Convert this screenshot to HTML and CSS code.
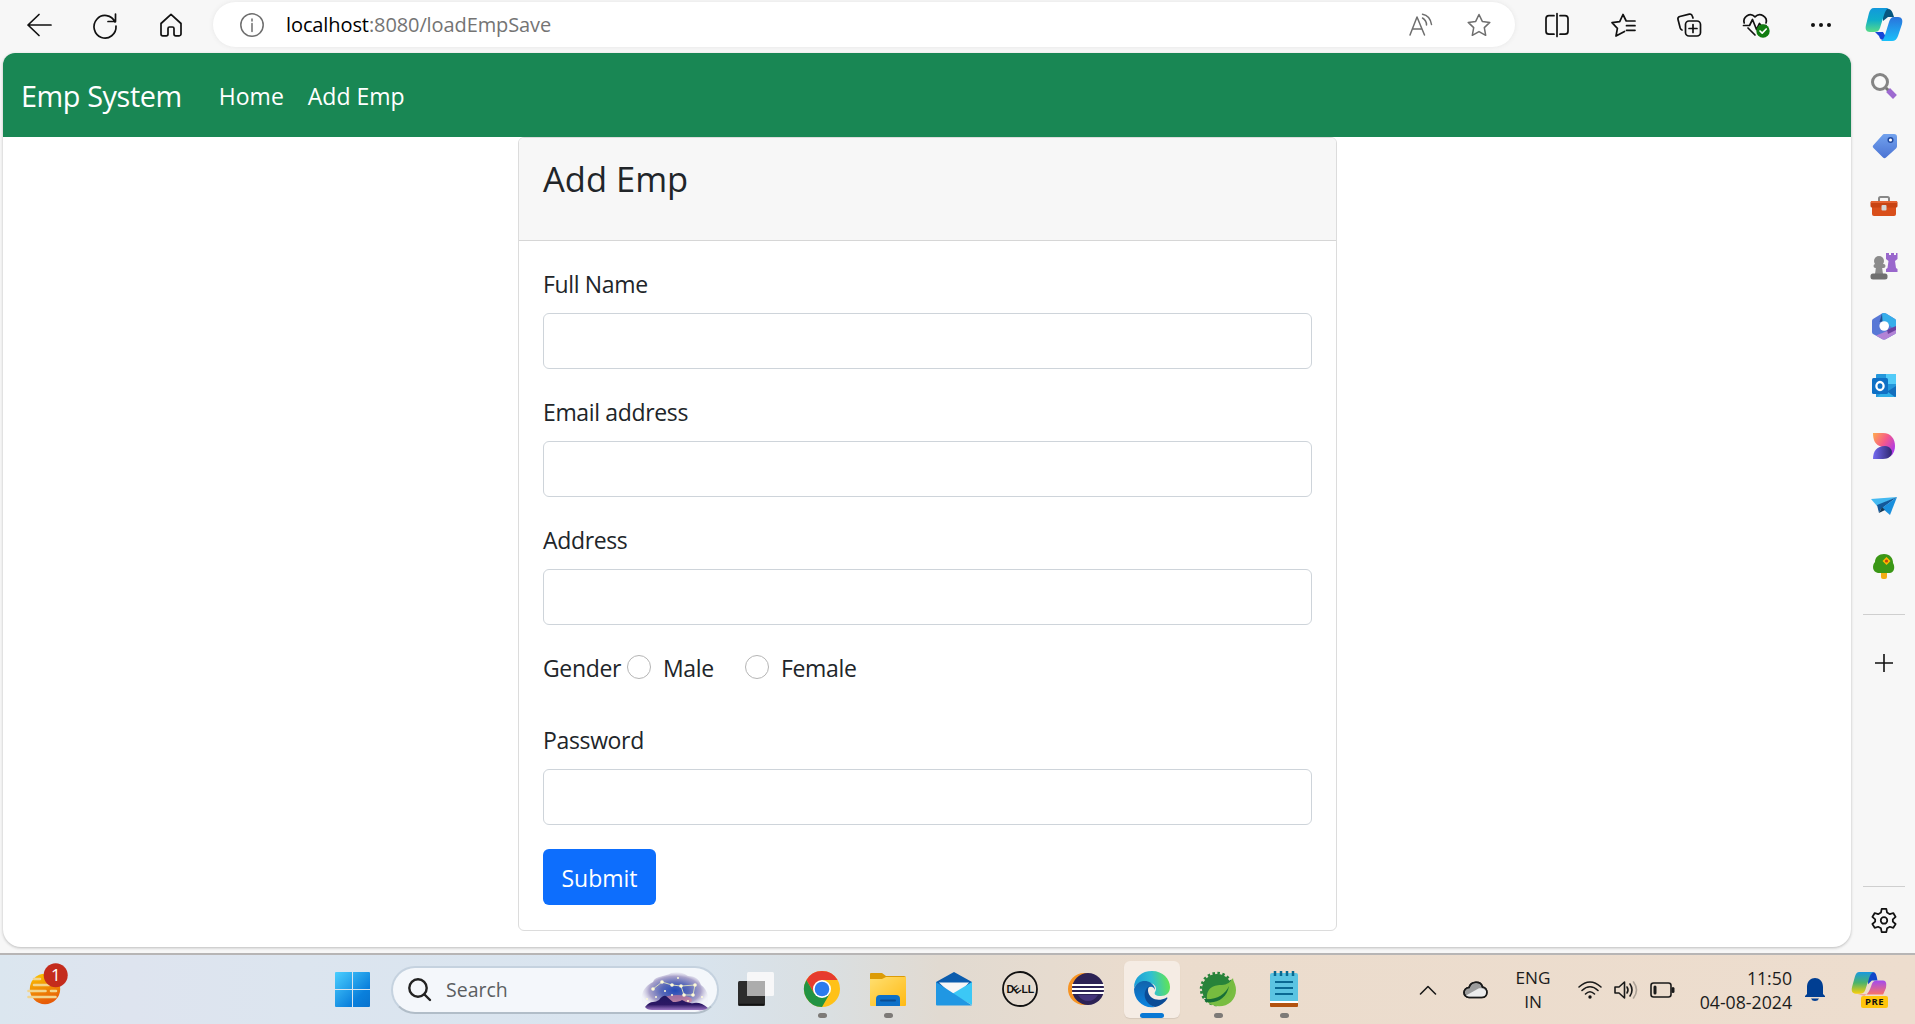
FILE: index.html
```html
<!DOCTYPE html>
<html lang="en">
<head>
<meta charset="utf-8">
<title>Add Emp</title>
<link rel="stylesheet" href="styles.css">
</head>
<body>
<div class="browser">
  <div class="main">
    <header class="toolbar">
      <svg class="ic" viewBox="0 0 24 24"><path d="M24 12H1M12 1.500 1 12 12 22.500"/></svg>
      <svg class="ic" viewBox="0 0 24 24"><path d="M22 9a11 11.300 0 1 0 1 4M22.500 1v7.500H15"/></svg>
      <svg class="ic" viewBox="0 0 24 24"><path d="M2 10.500 12 1.300l10 9.200V21a1.800 1.800 0 0 1-1.800 1.800h-3.400A1.800 1.800 0 0 1 15 21v-5.500a1.500 1.500 0 0 0-1.500-1.500h-3A1.500 1.500 0 0 0 9 15.500V21a1.800 1.800 0 0 1-1.800 1.800H3.800A1.800 1.800 0 0 1 2 21z"/></svg>
      <div class="address">
        <svg class="ic grey" viewBox="0 0 24 24"><circle cx="12" cy="12" r="11.200"/><path d="M12 10.500v8M12 6v2"/></svg>
        <span class="url"><b>localhost</b>:8080/loadEmpSave</span>
        <svg class="ic grey read" viewBox="0 0 24 24"><path d="M1 22 8 4l7.500 18M3.500 16h9M13.500 5a8 8 0 0 1 4 7M13.500 1.200c4.500.8 8 4 9 10.300" /></svg>
        <svg class="ic grey" viewBox="0 0 24 24"><path d="m12 1.500 3.300 6.900 7.500 1-5.500 5.200 1.400 7.700-6.700-3.700-6.700 3.700 1.400-7.700-5.500-5.200 7.500-1z"/></svg>
      </div>
      <div class="tools">
        <svg class="ic" viewBox="0 0 24 24"><path d="M9 2.700H4A3 3 0 0 0 1 5.700v12.500a3 3 0 0 0 3 3h5M15 2.700h5a3 3 0 0 1 3 3v12.500a3 3 0 0 1-3 3h-5M12 .500v23"/></svg>
        <svg class="ic" viewBox="0 0 24 24"><path d="M13.500 18.500 5 23l1.400-7.700L1 9.700l7.700-1L12 1.500l3.200 6.500H24M15.500 12.700H24M15.500 17.300H24"/></svg>
        <svg class="ic" viewBox="0 0 24 24"><rect x="8.500" y="8" width="15" height="15" rx="3.500"/><path d="M16 11.500v8M12 15.500h8M16 5l-.7-2a2.500 2.500 0 0 0-3-1.800L2.800 3.500A2.500 2.500 0 0 0 1 6.500l2.200 8.500c.3 1 1 1.700 1.800 2"/></svg>
        <svg class="ic health" viewBox="0 0 27 24"><path d="M1.200 10C-.5 4 7-1.500 12 3.800 17-1.500 25 4 23 10M.500 12.500h6l3-6 4 10 3-6 1.500 2H23M5 15l7 7"/><circle cx="20" cy="18" r="6.700" fill="#107c10" stroke="none"/><path d="m17 18 2.200 2.200 4-4.200" stroke="#fff"/></svg>
        <svg class="ic" viewBox="0 0 24 24"><g fill="#111" stroke="none"><circle cx="4" cy="12" r="2"/><circle cx="12" cy="12" r="2"/><circle cx="20" cy="12" r="2"/></g></svg>
      </div>
    </header>
    <div class="page">
      <nav class="navbar">
        <a class="brand">Emp System</a>
        <a class="nav-link">Home</a>
        <a class="nav-link">Add Emp</a>
      </nav>
      <main class="card">
        <div class="card-header"><p class="title">Add Emp</p></div>
        <form class="card-body">
          <div class="field"><label class="label" for="name">Full Name</label><input class="control" id="name" type="text"></div>
          <div class="field"><label class="label" for="email">Email address</label><input class="control" id="email" type="email"></div>
          <div class="field"><label class="label" for="addr">Address</label><input class="control" id="addr" type="text"></div>
          <div class="gender">
            <span class="gender-title">Gender</span>
            <input class="radio" type="radio" name="gender" id="m"><label class="male" for="m">Male</label>
            <input class="radio" type="radio" name="gender" id="f"><label for="f">Female</label>
          </div>
          <div class="field"><label class="label" for="pw">Password</label><input class="control" id="pw" type="password"></div>
          <button class="submit" type="button">Submit</button>
        </form>
      </main>
    </div>
  </div>
  <aside class="sidebar">
    <div class="cell first">
      <svg width="36" height="33" viewBox="0 0 36 33">
        <defs>
          <linearGradient id="cpA" x1="0" y1="0" x2="0" y2="1"><stop offset="0" stop-color="#1298dc"/><stop offset=".5" stop-color="#0faec9"/><stop offset="1" stop-color="#58db88"/></linearGradient>
          <linearGradient id="cpB" x1="0" y1="0" x2="0" y2="1"><stop offset="0" stop-color="#2a73dc"/><stop offset="1" stop-color="#18c0fa"/></linearGradient>
        </defs>
        <path d="M17 1h5c3 0 4 2 5 5l1 3h-6l-5 4z" fill="#07577f"/>
        <path d="M9 24h8l5 8h-4c-3 0-4-1-5-4z" fill="#1646d8"/>
        <path d="M8 0h15c-3 1-4 4-5 7l-4 13c-1 3-3 4-6 4H4c-4 0-5-3-4-7L3 5c1-3 2-5 5-5z" fill="url(#cpA)"/>
        <path d="M28 9h4c4 0 5 3 4 7l-4 12c-1 3-3 5-6 5H15c2-1 3-3 4-6l4-13c1-3 2-5 5-5z" fill="url(#cpB)"/>
      </svg>
    </div>
    <div class="cell"><svg class="side-ic" viewBox="0 0 28 28"><circle cx="10" cy="10" r="7.500" fill="#fafafa" stroke="#858585" stroke-width="3"/><path d="m16 16 3 3" stroke="#777" stroke-width="3"/><path d="m20 20 3 3" stroke="#9d6ad0" stroke-width="5.500" stroke-linecap="square"/></svg></div>
    <div class="cell"><svg class="side-ic" viewBox="0 0 28 28"><defs><linearGradient id="tag" x1="0" y1="0" x2="0" y2="1"><stop stop-color="#72a2ee"/><stop offset="1" stop-color="#4b73d3"/></linearGradient></defs><path d="M14 2h10c2 0 3 1 3 3v9c0 1-.5 2-1 2.500L16 25.500c-1 1-2 1-3 0L3.500 16c-1-1-1-2 0-3l9-10c.5-.7 1-1 1.500-1z" fill="url(#tag)"/><circle cx="20.500" cy="8" r="2.300" fill="#fff" stroke="#234a9e" stroke-width="1.500"/></svg></div>
    <div class="cell"><svg class="side-ic" viewBox="0 0 28 28"><path d="M9 9V6.500Q9 5 10.500 5h7Q19 5 19 6.500V9" fill="none" stroke="#888" stroke-width="2"/><path d="M2 13h24v9q0 2-2 2H4q-2 0-2-2z" fill="#d94f1b"/><rect x=".5" y="9" width="27" height="6.500" rx="1.500" fill="#c84312"/><path d="M1 10h26" stroke="#e46332" stroke-width="2"/><rect x="11.500" y="13" width="5" height="5.500" rx="1" fill="#d4d4d4"/></svg></div>
    <div class="cell"><svg class="side-ic" viewBox="0 0 28 28"><path d="M16 1h3v2h2V1h3v2h2V1h1.500v6L25 9l1 7 1.500 1v3H16v-3l1.500-1 1-7L16 7z" fill="#9967cc"/><g fill="#8b8b8b"><circle cx="9" cy="9" r="5"/><rect x="3.500" y="12" width="12" height="4" rx="2"/><path d="M6 15h6l1 7H5z"/><rect x=".5" y="21.500" width="17" height="6" rx="2.500" fill="#707070"/></g></svg></div>
    <div class="cell"><svg class="side-ic" viewBox="0 0 28 28"><path d="M14 1q1 0 2 .5l9 5.500q1 .7 1 2v11q0 1.300-1 2l-9 5q-2 1-4 0l-9-5q-1-.7-1-2V9q0-1.300 1-2l9-5.500q1-.5 2-.5z" fill="#5878d6"/><path d="M12 1.500q2-1 4 0L25 7q1 .7 1 2v9L14 10l-4-1z" fill="#36aeea"/><path d="M26 16v4q0 1.300-1 2l-9 5q-2 1-4 0l-6-3.500 10-4z" fill="#b283d6"/><path d="m17 18 9-4v4l-8 4z" fill="#6b40a0"/><path d="M12 1.500 9.500 10l3-.500z" fill="#234e91"/><circle cx="14.200" cy="14" r="4.800" fill="#fff"/></svg></div>
    <div class="cell"><svg class="side-ic" viewBox="0 0 28 28"><path d="M7 2h18q1 0 1 1v21q0 1-1 1H6V3q0-1 1-1z" fill="#2497db"/><path d="M16 2h10v10H16z" fill="#52cbf8"/><path d="m26 14-11 7 4 4h6q1 0 1-1z" fill="#136ebd"/><path d="m15 18 10 7H7z" fill="#30afe8"/><rect x="2" y="6" width="16" height="16" rx="1.500" fill="#0f70c5"/><ellipse cx="10" cy="14" rx="3.600" ry="4" fill="none" stroke="#fff" stroke-width="2.300"/></svg></div>
    <div class="cell"><svg class="side-ic" viewBox="0 0 28 28"><defs><linearGradient id="dsA" x1="0" x2="1" y2=".7"><stop stop-color="#ffac4d"/><stop offset=".5" stop-color="#f65b88"/><stop offset="1" stop-color="#a936ef"/></linearGradient><linearGradient id="dsB"><stop stop-color="#746af2"/><stop offset="1" stop-color="#2f2870"/></linearGradient></defs><path d="M3 1h10c8 0 12 6 12 13s-4 12-10 12L12 15C5 13 3 8 3 1z" fill="url(#dsA)"/><path d="M3 27c0-8 4-13 12-13 10 1 9 13-2 13z" fill="url(#dsB)"/></svg></div>
    <div class="cell"><svg class="side-ic" viewBox="0 0 28 28"><path d="m1 7 26-2-20 9z" fill="#44b9f1"/><path d="M7 13 27 5 11 17l-2 4z" fill="#13589a"/><path d="m12 16 15-11-7 18z" fill="#198fdd"/><path d="m9 21 3-6 3 3z" fill="#163957"/></svg></div>
    <div class="cell"><svg class="side-ic" viewBox="0 0 28 28"><path d="M11 20h6v5q0 2-2 2h-2q-2 0-2-2z" fill="#f2ad13"/><path d="M14 2c6 0 9 4 9 9 2 3 2 9-3 10H8c-6-1-6-8-3-11 0-5 4-8 9-8z" fill="#3b9716"/><path d="m16.500 5 4 4-4 4-4-4z" fill="#ffb900"/><circle cx="16.500" cy="9" r="1.600" fill="#c4470f"/></svg></div>
    <hr class="rule top-rule">
    <svg class="plus" viewBox="0 0 20 20"><path d="M10 1v18M1 10h18"/></svg>
    <hr class="rule bottom-rule">
    <svg class="gear" viewBox="0 0 28 28"><path d="M11.500 2h5l.8 4 3 1.700 3.700-1.200 2.500 4.200-3 2.600v2.400l3 2.600-2.500 4.200-3.700-1.200-3 1.700-.8 4h-5l-.8-4-3-1.700L4 22.500 1.500 18.300l3-2.600v-2.400l-3-2.600L4 6.500l3.700 1.200 3-1.700z"/><circle cx="14" cy="14.500" r="3.500"/></svg>
  </aside>
</div>

<footer class="taskbar">
  <div class="widgets">
    <svg width="44" height="44" viewBox="0 0 44 44">
      <defs><linearGradient id="sun" x1="0" y1="0" x2=".3" y2="1"><stop stop-color="#fcc900"/><stop offset="1" stop-color="#e75c08"/></linearGradient></defs>
      <circle cx="18" cy="26" r="15.200" fill="url(#sun)"/>
      <path d="M7 16h6M7 22h15M1.500 28h17M24 28h5M1.500 34h27" stroke="#f2d58e" stroke-width="2.600" stroke-linecap="round"/>
      <circle cx="28.700" cy="12.300" r="12" fill="#c42b1c"/>
    </svg>
    <span class="count">1</span>
  </div>
  <svg class="start" viewBox="0 0 35 35"><defs><linearGradient id="win" x1="0" y1="0" x2="1" y2="1"><stop stop-color="#4bcfff"/><stop offset=".7" stop-color="#0a80dc"/><stop offset="1" stop-color="#0873ce"/></linearGradient></defs><path d="M0 1q0-1 1-1h16v17H0zM18 0h16q1 0 1 1v16H18zM0 18h17v17H1q-1 0-1-1zM18 18h17v16q0 1-1 1H18z" fill="url(#win)"/></svg>
  <div class="search">
    <svg class="lens" viewBox="0 0 24 24"><circle cx="10" cy="10" r="8.700"/><path d="m16.500 16.500 5.500 5.500"/></svg>
    <span>Search</span>
    <svg class="art" viewBox="0 0 68 38">
      <defs>
        <radialGradient id="sky" cx=".5" cy=".5" r=".52"><stop stop-color="#234ab8"/><stop offset=".4" stop-color="#5868b8"/><stop offset=".75" stop-color="#a9a2ca"/><stop offset="1" stop-color="#dcd8e8" stop-opacity=".1"/></radialGradient>
        <linearGradient id="hill" x1="0" y1="0" x2="0" y2="1"><stop stop-color="#201760"/><stop offset=".6" stop-color="#2c1865"/><stop offset="1" stop-color="#a17ac8"/></linearGradient>
      </defs>
      <path d="M5 37C-3 27 1 15 12 10 14 3 25 5 30 1c7-2 13 0 17 3 7 0 11 3 13 9 7 5 10 15 4 24z" fill="url(#sky)"/>
      <ellipse cx="36" cy="28" rx="15" ry="5" fill="#dc7b91" opacity=".6"/>
      <path d="M4 35q4-5 8-5 3 0 6-2 4-5 7-4l7 6q6 0 9-2 6 4 12 3 7-1 14 5-4 3-10 2H11q-5 0-7-3z" fill="url(#hill)"/>
      <path d="m12 17 9-7 10 3 9 1 14-1-2 10H43l-3-9" fill="none" stroke="#d3d8bd"/>
      <g fill="#fffbd7"><circle cx="12" cy="17" r="1.800"/><circle cx="21" cy="10" r="1.800"/><circle cx="31" cy="13" r="1.800"/><circle cx="40" cy="14" r="1.800"/><circle cx="54" cy="13" r="1.800"/><circle cx="52" cy="23" r="1.800"/><circle cx="43" cy="23" r="1.800"/><circle cx="24" cy="19" r="1"/><circle cx="31" cy="23" r="1"/><circle cx="15" cy="25" r="1"/><circle cx="61" cy="25" r="1"/><circle cx="37" cy="6" r="1"/><circle cx="6" cy="27" r="1"/><circle cx="47" cy="29" r="1"/></g>
    </svg>
  </div>
  <div class="apps">
    <div class="app"><svg viewBox="0 0 36 36"><rect y="10" width="27" height="25" rx="1.500" fill="#2c2c2c"/><path d="M1 33.500h25" stroke="#111" stroke-width="1.500"/><rect x="9" y="1" width="27" height="24" rx="1.500" fill="#fafafa" opacity=".9"/><path d="M9 10h18v15H10q-1 0-1-1z" fill="#acacac"/></svg></div>
    <div class="app run"><svg viewBox="0 0 36 36"><circle cx="18" cy="18" r="18" fill="#ffc117"/><path d="M2.400 9A18 18 0 0 1 33.600 9H18L10.200 22.500z" fill="#e63b2e"/><path d="M2.400 9A18 18 0 0 0 18 36l7.800-13.500H10.200z" fill="#229342"/><circle cx="18" cy="18" r="9" fill="#fff"/><circle cx="18" cy="18" r="7.300" fill="#2c7bee"/></svg></div>
    <div class="app run"><svg viewBox="0 0 36 36"><defs><linearGradient id="fold" x1="0" y1="0" x2="1" y2="1"><stop stop-color="#ffdf70"/><stop offset="1" stop-color="#ffba14"/></linearGradient></defs><path d="M0 3q0-1 1-1h11l4 3h18q2 0 2 2v4H0z" fill="#dc9b06"/><path d="M0 8h12l4-2h20v28q0 1-1 1H1q-1 0-1-1z" fill="url(#fold)"/><path d="M6 35v-7q0-4 4-4h16q4 0 4 4v7z" fill="#0d70c8"/><path d="M11 29.500h14" stroke="#0a4d93" stroke-width="2" stroke-linecap="round"/></svg></div>
    <div class="app"><svg viewBox="0 0 36 36"><path d="M0 11 18 1l18 10v8H0z" fill="#0b5cad"/><path d="M3 11.500h30L19 27z" fill="#f7f7f7"/><path d="M36 11v23L16 23z" fill="#3cc8f6"/><path d="m0 11 36 23.500H1q-1 0-1-1z" fill="#2097e3"/></svg></div>
    <div class="app"><svg viewBox="0 0 36 36"><circle cx="18" cy="18" r="17" fill="none" stroke="#111" stroke-width="1.800"/><text class="dell" x="4.500" y="22">D</text><text class="dell" transform="translate(14.300 23.500) rotate(-38)">E</text><text class="dell" x="19.500" y="22">LL</text></svg></div>
    <div class="app"><svg viewBox="0 0 36 36"><circle cx="16" cy="18" r="16" fill="#f79423"/><circle cx="20" cy="18" r="16" fill="#2c2255"/><path d="M10 24h20q-4 6-10 6t-10-6z" fill="#44347b"/><path d="M4 14h32M4 18h32M4 22h32" stroke="#fff" stroke-width="1.800"/></svg></div>
    <div class="app run active"><svg viewBox="0 0 36 36">
      <defs><linearGradient id="edA" y1=".5" x2="1" y2=".4"><stop stop-color="#199cd9"/><stop offset=".5" stop-color="#30bfd2"/><stop offset="1" stop-color="#63e64f"/></linearGradient><linearGradient id="edB" x1="0" y1="0" x2="0" y2="1"><stop stop-color="#1263ab"/><stop offset="1" stop-color="#0a84e0"/></linearGradient></defs>
      <path d="M0 17C0 6 8 0 18 0c11 0 18 8 18 16 0 6-4 9-9 9-6 0-7-2-6-4 2-3 1-6-2-8C11 9 3 11 0 17z" fill="url(#edA)"/>
      <path d="M0 18C3 10 11 8 17 12c3 2 4 5 4 7-2-5-7-4-9 1-2 7 3 14 9 16C9 38 0 29 0 18z" fill="url(#edB)"/>
      <path d="M14 16c-6 5-4 17 7 20 6-1 10-5 12-8 1-1 0-2-1-1-8 4-17 1-18-7 0-1 0-3 1-5z" fill="#0b4c96"/>
    </svg></div>
    <div class="app run"><svg viewBox="0 0 36 36"><circle cx="17" cy="18" r="15" fill="#28833a"/><circle cx="17" cy="18" r="15.800" fill="none" stroke="#28833a" stroke-width="2.800" stroke-dasharray="2.500 2.460"/><path d="M6 30C17 34 24 25 32 8q4 5 4 11c0 15-18 22-30 11z" fill="#79bd42"/><path d="M7 28C6 16 15 14 22 14q7 0 11-7c3 14-5 23-16 22-5 0-7 1-10-1z" fill="#76bb3f"/><path d="M4 28c12 1 21-4 25-13-2 12-12 18-23 16z" fill="#176f37"/></svg></div>
    <div class="app run"><svg viewBox="0 0 36 36"><path d="M4 30h28v5q0 1-1 1H5q-1 0-1-1z" fill="#b25311"/><path d="M4 28h28v4H4z" fill="#fff"/><path d="M4 4q0-2 2-2h24q2 0 2 2v26H4z" fill="#5bc4e2"/><path d="M9 0v5M15 0v5M21 0v5M27 0v5" stroke="#086890" stroke-width="2.500"/><path d="M9 11h18M9 17h18M9 23h18" stroke="#096993" stroke-width="2"/></svg></div>
  </div>
  <div class="tray">
    <svg class="chev" viewBox="0 0 18 12"><path d="m1.500 10 7.500-7.500 7.500 7.500"/></svg>
    <svg class="cloud" viewBox="0 0 25 18"><path d="M6 16.500a5 5 0 0 1 0-10C8-.5 18-.5 19.500 6c6 .5 6 10.500-1 10.500z" fill="#9c9c9c"/><path d="m3 14.500 12.500-7c3-1 8 1 8 4.500q-1 4-5 3.700H6z" fill="#ececec" stroke="none"/><path d="M6 16.500a5 5 0 0 1 0-10C8-.5 18-.5 19.500 6c6 .5 6 10.500-1 10.500z"/></svg>
    <div class="lang"><span>ENG</span><span>IN</span></div>
    <svg class="wifi" viewBox="0 0 24 20"><path d="M1 7q11-10 22 0M4 10.500q8-7.500 16 0M7.500 14q4.500-4.500 9 0"/><circle cx="12" cy="17" r="1.700" fill="#111" stroke="none"/></svg>
    <svg class="vol" viewBox="0 0 24 20"><path d="M1 7h4l5.500-5v16L5 13H1zM13 7q2 3 0 6M16 4q4 6 0 12"/><path d="M19.500 2q6 8 0 16" opacity=".3"/></svg>
    <svg class="bat" viewBox="0 0 25 16"><rect x="1" y="1" width="20" height="14" rx="2.500"/><path d="M5 5v6" stroke-width="3"/><path d="M23 6.500v3" stroke-width="3"/></svg>
    <div class="clock"><span>11:50</span><span>04-08-2024</span></div>
    <svg class="bell" viewBox="0 0 20 24"><path d="M2 16V9c0-12 16-12 16 0v7l2 2v1H0v-1z" fill="#003e92"/><path d="M6 20.500h8q-1 2.500-4 2.500t-4-2.500z" fill="#003e92"/></svg>
    <div class="pre">
      <svg viewBox="0 0 36 34">
        <defs><linearGradient id="pa" x1="0" y1="0" x2="0" y2="1"><stop stop-color="#1998e0"/><stop offset=".5" stop-color="#4cb36b"/><stop offset="1" stop-color="#f8cf0b"/></linearGradient><linearGradient id="pb" x1="0" y1="0" x2="0" y2="1"><stop stop-color="#a24af0"/><stop offset="1" stop-color="#ff755d"/></linearGradient></defs>
        <path d="M17 0h5c3 0 4 3 5 9h-6l-4 4z" fill="#1046c9"/><path d="M8 0h15c-3 1-4 4-5 7l-4 12c-1 3-3 4-6 4H4c-4 0-5-3-4-7L3 5c1-3 2-5 5-5z" fill="url(#pa)"/><path d="M27 9h6c3 0 4 3 3 8l-3 7H6l7 1c4-1 6-6 8-12 1-3 3-4 6-4z" fill="url(#pb)"/>
      </svg>
      <span class="tag">PRE</span>
    </div>
  </div>
</footer>
</body>
</html>
```
FILE: styles.css
```css
* { box-sizing: border-box; }
body { margin: 0; width: 1915px; height: 1024px; overflow: hidden; background: #f7f7f7; color: #212529; font-family: "Open Sans", "Noto Sans", sans-serif; }
svg { display: block; flex: none; overflow: visible; }

.browser { display: flex; height: 953px; }
.main { width: 1851px; flex: none; display: flex; flex-direction: column; }

.toolbar { height: 53px; padding: 2px 0 6px 27px; display: flex; align-items: center; }
.ic { width: 24px; height: 24px; fill: none; stroke: #111; stroke-width: 1.7; stroke-linecap: round; stroke-linejoin: round; margin-right: 42px; }
.ic.grey { stroke: #6e6e6e; margin-right: 24px; stroke-width: 1.5; }
.toolbar > .ic:nth-child(3) { margin-right: 30px; }
.address { flex: none; width: 1302px; height: 45px; border-radius: 23px; background: #fff; box-shadow: 0 0 5px #e6e6e6; display: flex; align-items: center; padding-left: 27px; }
.url { flex: 1; margin-left: -2px; color: #747474; font-size: 20px; letter-spacing: -.1px; line-height: 28px; }
.url b { color: #000; font-weight: 400; }
.ic.read { margin-right: 34px; }
.tools { display: flex; margin-left: 30px; }
.tools .ic:last-child { margin-right: 0; }
.ic.health { width: 27px; margin-right: 39px; }

.page { width: 1848px; height: 894px; margin-left: 3px; background: #fff; border-radius: 12px 12px 18px 18px; overflow: hidden; box-shadow: 0 1px 3px #bbb; }
.navbar { height: 84px; background: #198754; color: #fff; display: flex; align-items: center; padding: 2px 18px 0; font-size: 23px; }
.brand { font-size: 28.8px; letter-spacing: -.4px; margin-right: 25px; padding-bottom: 2px; }
.nav-link { padding: 0 12px; }

.card { width: 819px; height: 794px; margin-left: 515px; border: 1px solid #dcdcdc; border-radius: 6px; background: #fff; }
.card-header { height: 103px; padding: 12px 24px; background: #f7f7f7; border-bottom: 1px solid #d6d6d6; border-radius: 5px 5px 0 0; }
.title { margin: 0; font-size: 34.5px; line-height: 58px; }
.card-body { padding: 24px; font-size: 23px; line-height: 36px; letter-spacing: -.35px; }
.field { margin-bottom: 24px; }
.label { display: block; padding-top: 1px; margin-bottom: 11px; }
.control { display: block; width: 100%; height: 56px; border: 1px solid #ced4da; border-radius: 6px; background: #fff; padding: 9px 18px; font: inherit; }
.gender { display: flex; height: 48px; margin-bottom: 24px; padding-top: 1px; }
.gender-title { width: 78px; }
.radio { appearance: none; width: 24px; height: 24px; margin: 5px 12px 0 6px; border: 1px solid #b5b5b5; border-radius: 50%; }
.male { width: 52px; margin-right: 24px; }
.submit { display: block; width: 113px; height: 56px; border: 0; border-radius: 6px; background: #0d6efd; color: #fff; font: 23px/36px "Open Sans", "Noto Sans", sans-serif; padding: 2px 0 0; }

.sidebar { width: 64px; display: flex; flex-direction: column; align-items: center; padding-left: 1px; }
.cell { height: 60px; flex: none; display: flex; align-items: center; justify-content: center; }
.cell.first { height: 56px; padding-bottom: 7px; }
.side-ic { width: 28px; height: 28px; }
.rule { width: 42px; height: 1px; border: 0; background: #cfcfcf; flex: none; }
.top-rule { margin: 18px 0 38px; }
.plus { width: 20px; height: 20px; stroke: #111; stroke-width: 1.6; }
.bottom-rule { margin: auto 0 20px; }
.gear { width: 26px; height: 26px; margin-bottom: 20px; fill: none; stroke: #111; stroke-width: 1.9; stroke-linejoin: round; }

.taskbar { height: 71px; border-top: 2px solid #b7b5b5; display: flex; align-items: center; background: linear-gradient(90deg, #dbe6ef 0, #dee4ef 130px, #dce5ef 300px, #d8e4ef 680px, #dadfe1 830px, #e1dad1 940px, #ebdccd 1160px, #edddce 1915px); }
.widgets { display: grid; margin: -9px 0 0 27px; width: 44px; height: 44px; }
.widgets > * { grid-area: 1 / 1; }
.count { color: #fff; font-size: 17px; line-height: 24px; padding-left: 24px; z-index: 1; }
.start { width: 35px; height: 35px; margin-left: 264px; }
.search { width: 328px; height: 48px; margin-left: 21px; border: 2px solid #c5d2df; border-bottom-color: #b1bdc8; border-radius: 24px; background: #f4f7fb; display: flex; align-items: center; padding: 0 6px 0 15px; color: #5b5e61; font-size: 19.500px; }
.search > span { flex: 1; }
.lens { width: 24px; height: 24px; margin-right: 14px; fill: none; stroke: #222; stroke-width: 2.4; stroke-linecap: round; }
.art { width: 68px; height: 38px; margin: 2px 2px 0 0; }
.apps { display: flex; margin-left: 9px; gap: 10px; }
.app { width: 56px; height: 57px; padding-top: 10px; display: flex; flex-direction: column; align-items: center; border-radius: 6px; }
.app svg { width: 36px; height: 36px; }
.app.run::after { content: ""; width: 9px; height: 5px; margin-top: 6px; border-radius: 3px; background: #7d7a77; }
.app.active { background: #f5ece4; box-shadow: 0 1px 1px #d6c8bb; }
.app.active::after { width: 24px; background: #0878d4; }
.dell { font: 700 10.500px "Liberation Sans", sans-serif; letter-spacing: -.2px; fill: #111; }

.tray { display: flex; align-items: center; margin-left: 107px; color: #1c1c1c; font-size: 17.7px; line-height: 24px; }
.tray > svg { fill: none; stroke: #1a1a1a; stroke-width: 1.6; stroke-linejoin: round; stroke-linecap: round; }
.chev { width: 18px; height: 12px; }
.cloud { width: 25px; height: 18px; margin-left: 26px; }
.lang { display: flex; flex-direction: column; align-items: center; width: 40px; margin-left: 25px; font-size: 17.2px; }
.wifi { width: 24px; height: 20px; margin-left: 25px; }
.vol { width: 24px; height: 20px; margin-left: 12px; }
.bat { width: 25px; height: 16px; margin-left: 12px; }
.clock { display: flex; flex-direction: column; align-items: flex-end; width: 100px; margin-left: 17px; }
.tray > .bell { width: 20px; height: 24px; margin-left: 13px; stroke: none; }
.pre { display: grid; width: 36px; height: 36px; margin-left: 27px; }
.pre > * { grid-area: 1 / 1; }
.pre > svg { width: 34px; height: 32px; }
.tag { align-self: end; justify-self: end; width: 27px; height: 12px; border-radius: 2px; background: #ffc50b; color: #111; font-size: 9.500px; font-weight: 700; line-height: 12px; text-align: center; letter-spacing: .4px; z-index: 1; }
```
